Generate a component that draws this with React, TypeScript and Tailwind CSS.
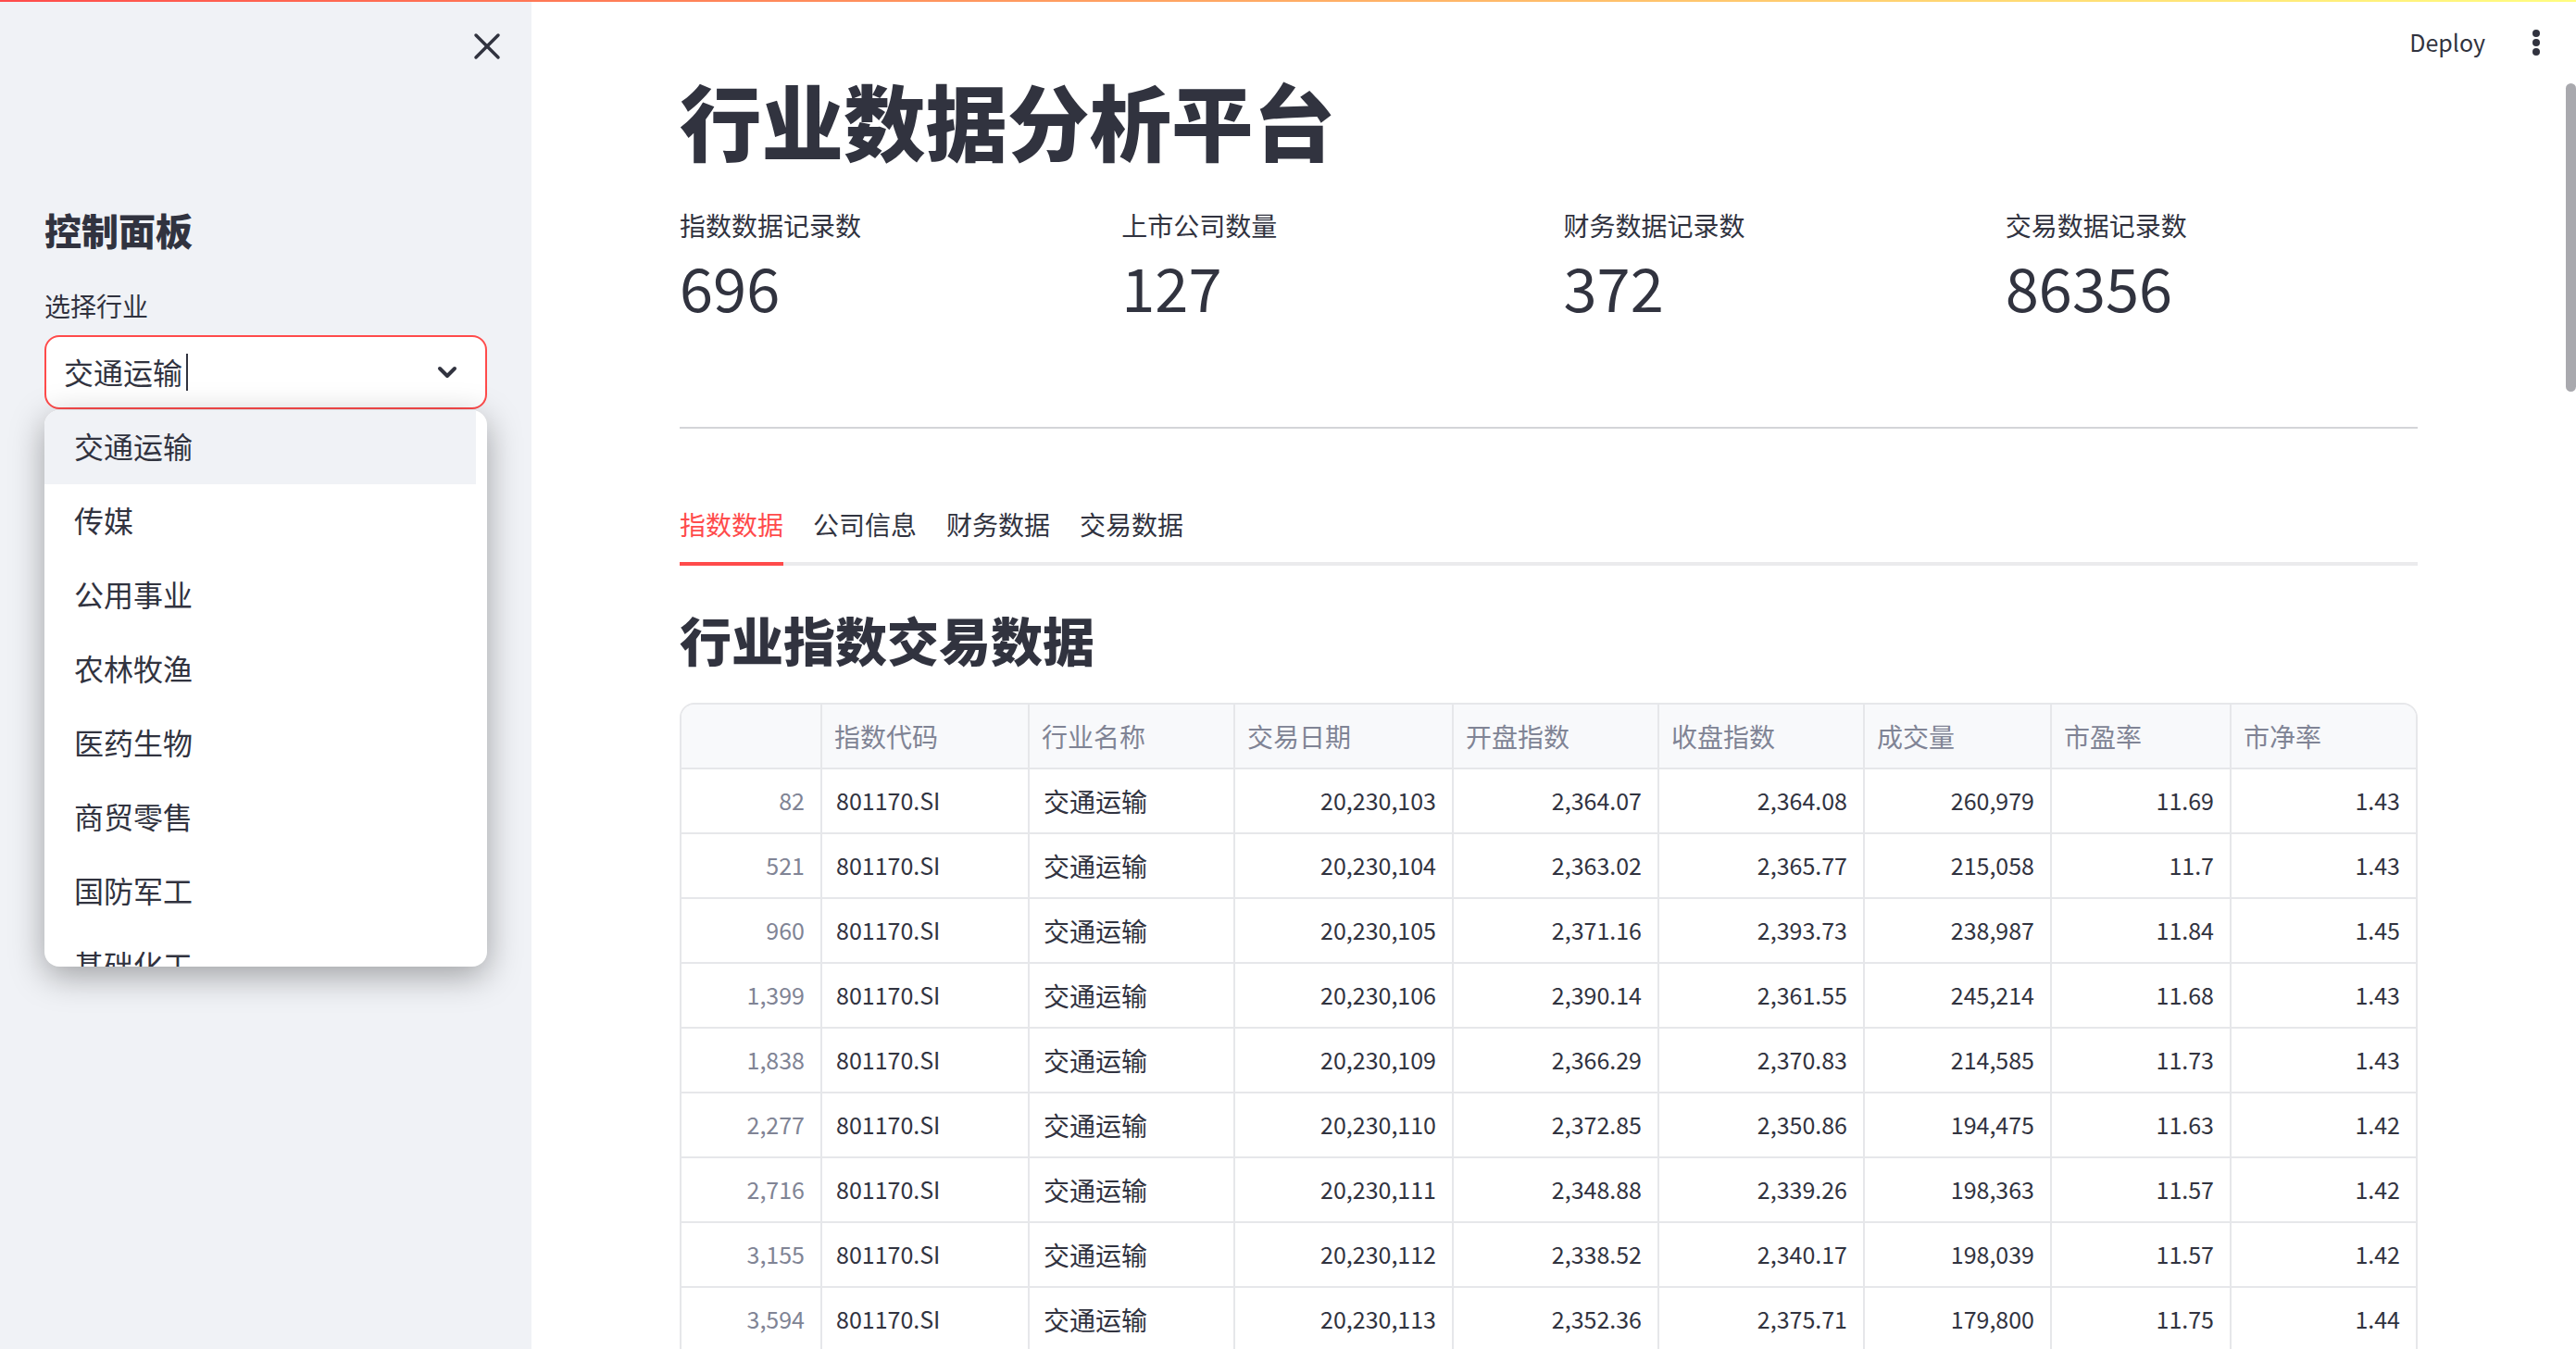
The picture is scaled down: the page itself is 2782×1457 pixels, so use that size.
import { ChevronDown, X } from "lucide-react";

const OPTIONS = ["交通运输", "传媒", "公用事业", "农林牧渔", "医药生物", "商贸零售", "国防军工", "基础化工"];

const METRICS = [
	{ label: "指数数据记录数", value: "696" },
	{ label: "上市公司数量", value: "127" },
	{ label: "财务数据记录数", value: "372" },
	{ label: "交易数据记录数", value: "86356" },
];

const TABS = ["指数数据", "公司信息", "财务数据", "交易数据"];

const COLUMNS = ["", "指数代码", "行业名称", "交易日期", "开盘指数", "收盘指数", "成交量", "市盈率", "市净率"];

const ROWS = [
	["82", "20,230,103", "2,364.07", "2,364.08", "260,979", "11.69", "1.43"],
	["521", "20,230,104", "2,363.02", "2,365.77", "215,058", "11.7", "1.43"],
	["960", "20,230,105", "2,371.16", "2,393.73", "238,987", "11.84", "1.45"],
	["1,399", "20,230,106", "2,390.14", "2,361.55", "245,214", "11.68", "1.43"],
	["1,838", "20,230,109", "2,366.29", "2,370.83", "214,585", "11.73", "1.43"],
	["2,277", "20,230,110", "2,372.85", "2,350.86", "194,475", "11.63", "1.42"],
	["2,716", "20,230,111", "2,348.88", "2,339.26", "198,363", "11.57", "1.42"],
	["3,155", "20,230,112", "2,338.52", "2,340.17", "198,039", "11.57", "1.42"],
	["3,594", "20,230,113", "2,352.36", "2,375.71", "179,800", "11.75", "1.44"],
];

const GRID = "grid grid-cols-[152px_224px_222px_236px_222px_222px_202px_194px_199px]";

function Sidebar() {
	return (
		<aside className="relative w-[574px] shrink-0 bg-[#f0f2f6] px-[48px]">
			<div className="flex h-[100px] items-center justify-end">
				<X size={48} strokeWidth={1.75} className="-mr-[24px]" />
			</div>
			<h2 className="mt-[118px] h-[60px] text-[40px] leading-[60px] font-black">控制面板</h2>
			<div className="mt-[32px] h-[40px] text-[28px] leading-[40px]">选择行业</div>
			<div className="relative mt-[12px]">
				<div className="flex h-[80px] items-center rounded-[16px] border-2 border-[#ff4b4b] bg-white pr-[25px] pl-[19px] text-[32px]">
					<span className="mb-[3px]">交通运输</span>
					<span className="ml-[4px] h-[40px] w-[2px] bg-[#31333f]" />
					<ChevronDown size={32} strokeWidth={3} className="ml-auto" />
				</div>
				<ul className="absolute top-[81px] right-0 left-0 z-10 h-[601px] overflow-hidden rounded-[16px] bg-white shadow-[0_10px_36px_rgba(0,0,0,0.34)]">
					{OPTIONS.map((option, i) => (
						<li
							key={option}
							className={`flex h-[80px] items-center pb-[5px] pl-[32px] text-[32px] ${i === 0 ? "mr-[12px] bg-[#f0f2f6]" : ""}`}
						>
							{option}
						</li>
					))}
				</ul>
			</div>
		</aside>
	);
}

function DataTable() {
	return (
		<div className="mt-[34px] rounded-t-[16px] border-2 border-[#e6e7ea] text-[28px]">
			<div className={`${GRID} h-[70px] rounded-t-[14px] border-b-2 border-[#e6e7ea] bg-[#f8f9fb] text-[#808495]`}>
				{COLUMNS.map((col, i) => (
					<div key={col} className={`flex items-center pl-[13px] ${i < 8 ? "border-r-2 border-[#e6e7ea]" : ""}`}>
						{col}
					</div>
				))}
			</div>
			{ROWS.map((row) => (
				<div key={row[0]} className={`${GRID} h-[70px] border-b-2 border-[#e6e7ea]`}>
					<div className="flex items-center justify-end border-r-2 border-[#e6e7ea] pr-[17px] text-[25px] text-[#808495]">{row[0]}</div>
					<div className="flex items-center border-r-2 border-[#e6e7ea] pl-[15px] text-[25px]">801170.SI</div>
					<div className="flex items-center border-r-2 border-[#e6e7ea] pl-[15px]">交通运输</div>
					{row.slice(1).map((cell, i) => (
						<div
							key={i}
							className={`flex items-center justify-end pr-[17px] text-[25px] ${i < 5 ? "border-r-2 border-[#e6e7ea]" : ""}`}
						>
							{cell}
						</div>
					))}
				</div>
			))}
		</div>
	);
}

export default function App() {
	return (
		<div className="relative flex h-[1457px] w-[2782px] overflow-hidden bg-white font-['Noto_Sans_CJK_SC',sans-serif] text-[#31333f]">
			<div className="absolute top-0 right-0 left-0 z-20 h-[2px] bg-gradient-to-r from-[#ff4b4b] to-[#fffd80]" />
			<Sidebar />
			<main className="min-w-0 flex-1 pt-[78px] pr-[171px] pl-[160px]">
				<h1 className="h-[100px] text-[88.5px] leading-[100px] font-black">行业数据分析平台</h1>
				<div className="mt-[45px] grid grid-cols-4 gap-x-[32px]">
					{METRICS.map((metric) => (
						<div key={metric.label}>
							<div className="h-[40px] text-[28px] leading-[40px]">{metric.label}</div>
							<div className="mt-[6px] h-[80px] text-[65px] leading-[80px]">{metric.value}</div>
						</div>
					))}
				</div>
				<hr className="mt-[112px] border-t-2 border-[#d4d5d8]" />
				<div className="mt-[64px] flex gap-[32px] border-b-4 border-[#ebebed]">
					{TABS.map((tab, i) => (
						<div
							key={tab}
							className={`-mb-[4px] flex h-[84px] items-center border-b-4 pb-[2px] text-[28px] ${i === 0 ? "border-[#ff4b4b] text-[#ff4b4b]" : "border-transparent"}`}
						>
							{tab}
						</div>
					))}
				</div>
				<h2 className="mt-[44px] h-[70px] text-[56px] leading-[70px] font-black">行业指数交易数据</h2>
				<DataTable />
			</main>
			<div className="absolute top-0 right-0 z-10 flex h-[92px] items-center pr-[39px]">
				<span className="mb-[1px] text-[25px]">Deploy</span>
				<svg width="8" height="28" viewBox="0 0 8 28" className="ml-[51px]" fill="#31333f">
					<circle cx="4" cy="4" r="4" />
					<circle cx="4" cy="14" r="4" />
					<circle cx="4" cy="24" r="4" />
				</svg>
			</div>
			<div className="absolute top-[90px] right-0 z-10 h-[333px] w-[11px] rounded-[6px] bg-[#a9a9ae]" />
		</div>
	);
}
